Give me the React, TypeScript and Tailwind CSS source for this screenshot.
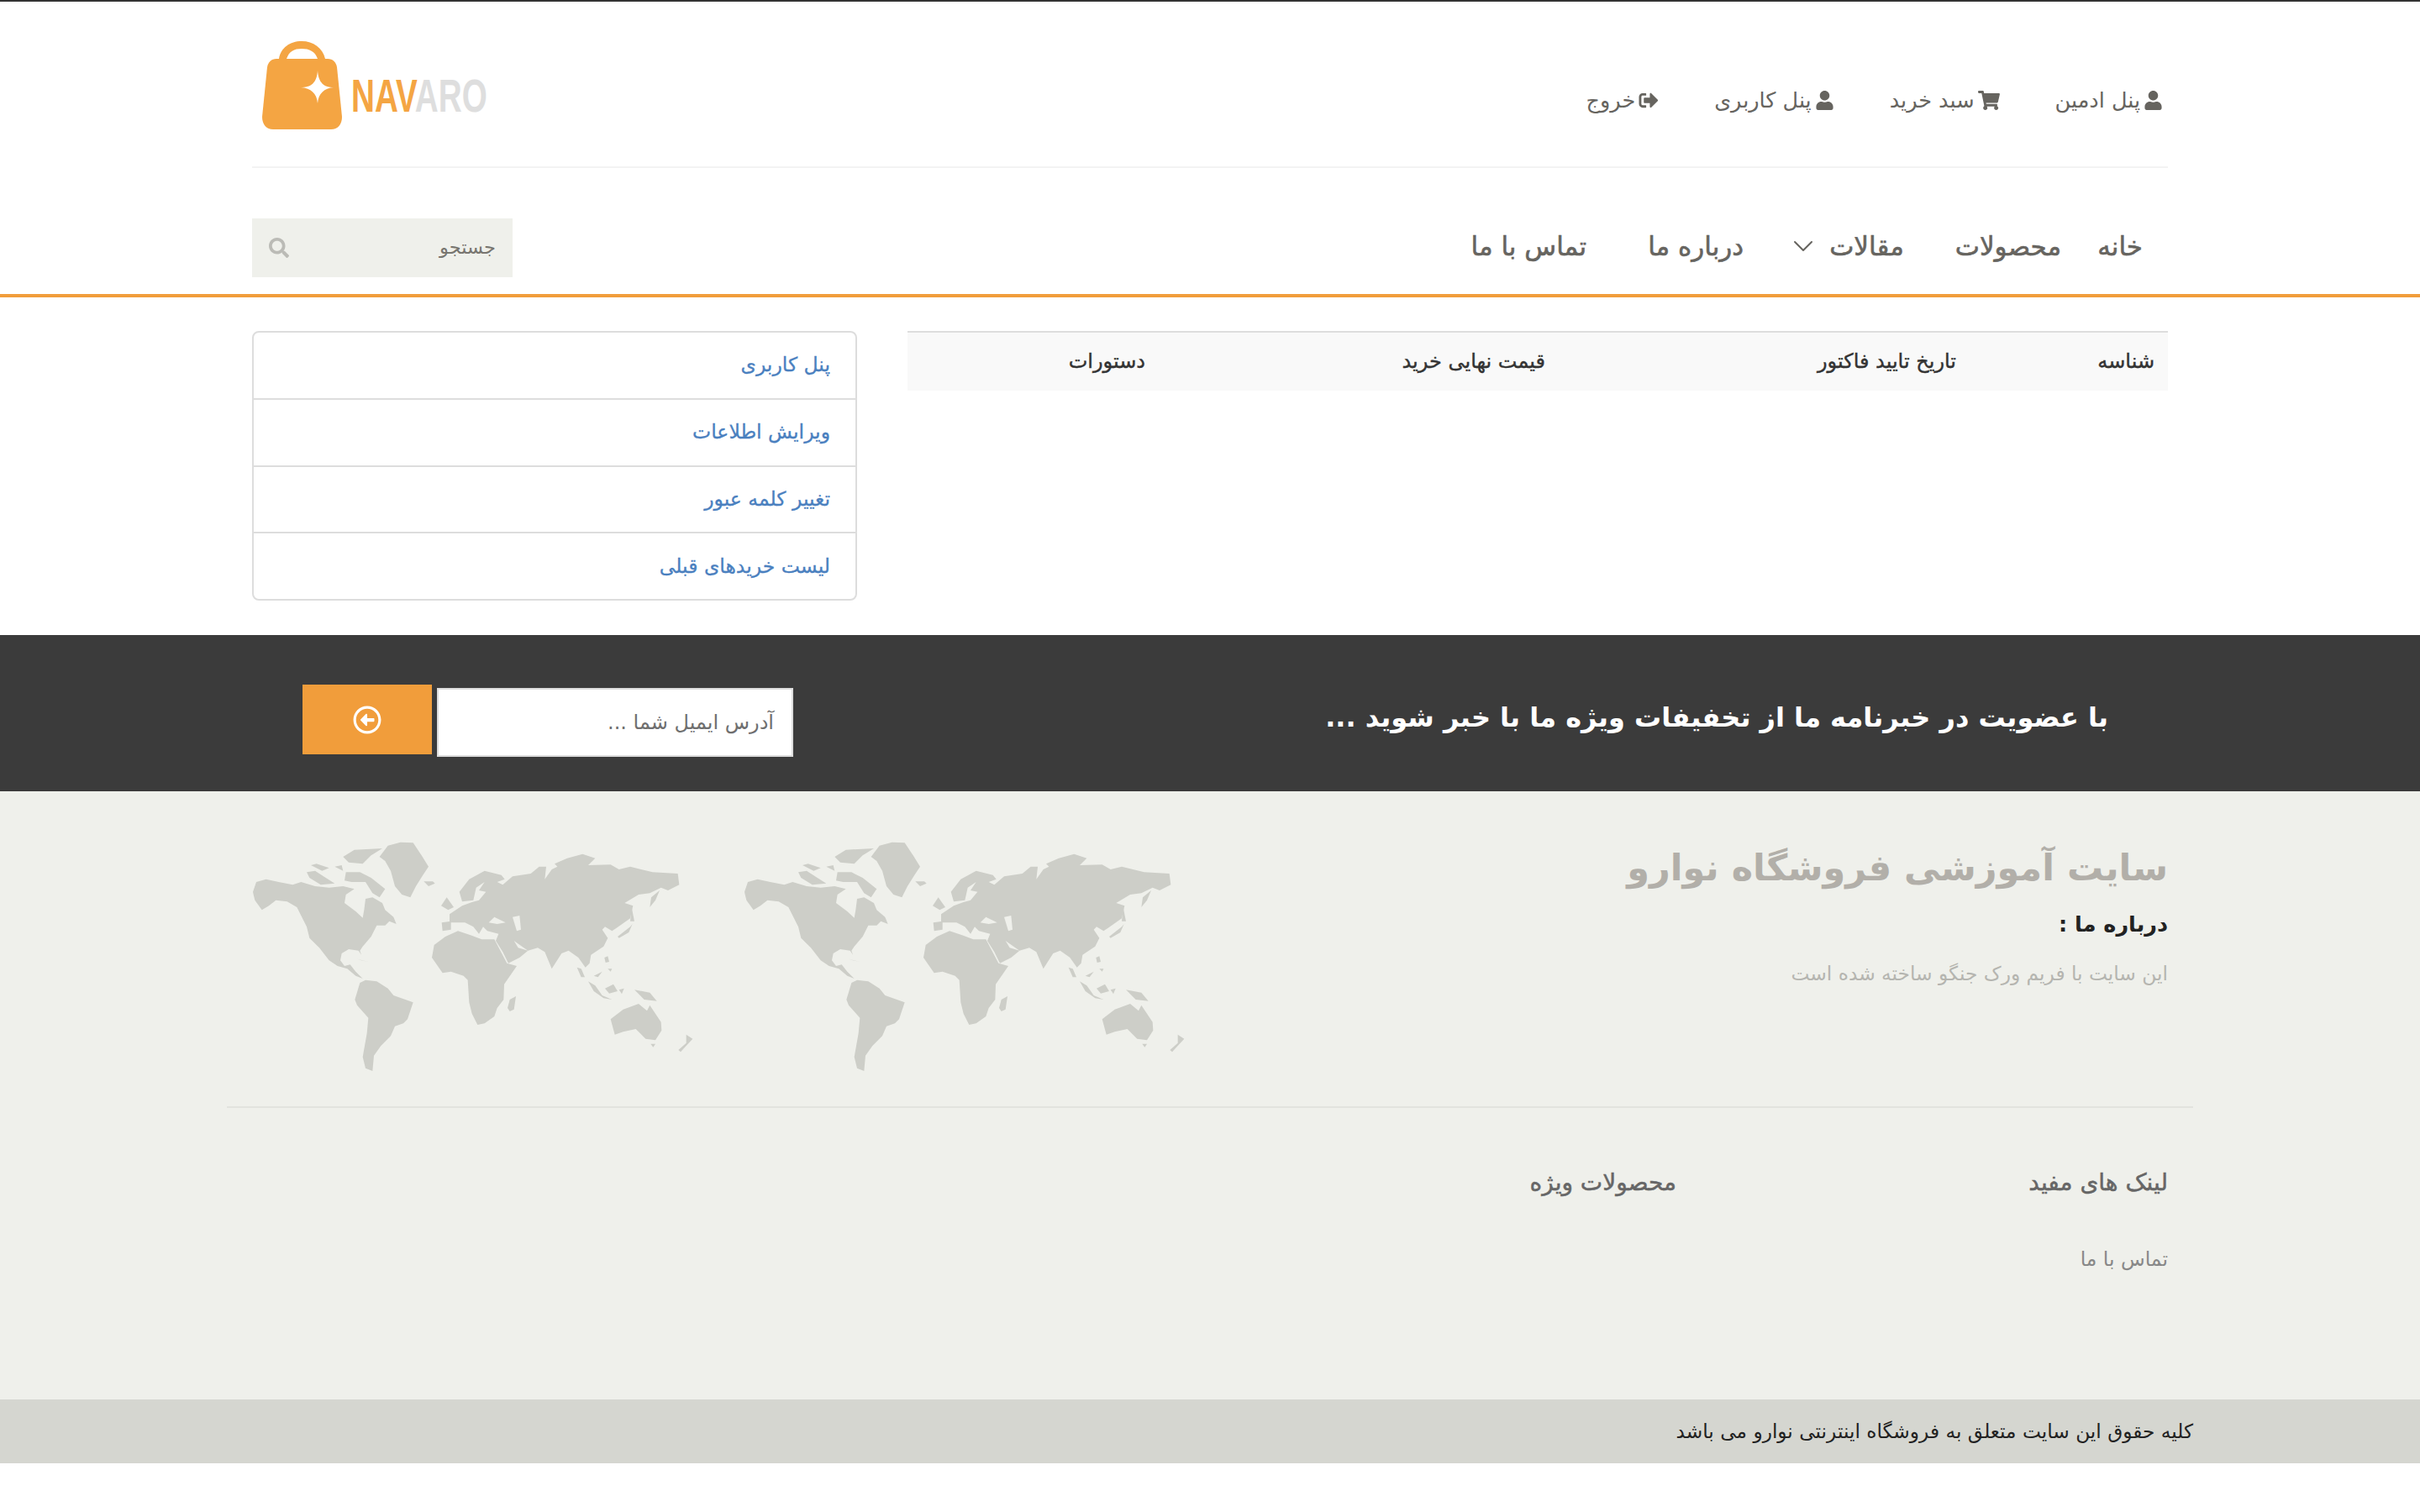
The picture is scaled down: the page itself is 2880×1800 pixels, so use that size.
import React from 'react';
import { ChevronDown } from 'lucide-react';
import { FaUser, FaShoppingCart, FaSignOutAlt, FaSearch, FaRegArrowAltCircleLeft } from 'react-icons/fa';

const topLinks = [
  { label: 'پنل ادمین', icon: <FaUser className="w-[23px] h-[23px]" /> },
  { label: 'سبد خرید', icon: <FaShoppingCart className="w-[26px] h-[23px]" /> },
  { label: 'پنل کاربری', icon: <FaUser className="w-[23px] h-[23px]" /> },
  { label: 'خروج', icon: <FaSignOutAlt className="w-[24px] h-[23px]" /> },
];

const sideLinks = ['پنل کاربری', 'ویرایش اطلاعات', 'تغییر کلمه عبور', 'لیست خریدهای قبلی'];

// traced from the map: 1 unit = 1/3px, second half of the map is shifted by 795
const WorldMap = () => (
  <svg viewBox="15 6 1575 822" className="w-[525px] h-[274px] shrink-0" fill="#cdcec8">
    <path d="M18 185 30 150 65 140 110 150 160 160 190 150 240 165 290 170 340 165 380 175 350 195 345 225 385 255 410 278 415 250 420 210 445 205 480 225 490 250 520 275 530 300 505 290 490 305 460 305 440 345 410 380 400 395 405 410 395 395 360 390 335 405 330 430 345 450 365 445 385 470 410 495 385 485 355 460 320 450 290 430 255 385 220 350 210 310 175 240 140 220 100 215 75 235 50 250 25 215 20 195Z" />
    <path d="M210 115 240 110 270 130 310 155 260 160 220 135Z" />
    <path d="M225 90 245 85 290 100 265 110Z" />
    <path d="M310 95 335 90 340 110Z" />
    <path d="M340 60 380 35 480 30 440 55 410 85 360 80Z" />
    <path d="M350 115 400 115 440 135 490 175 470 205 445 190 420 150 370 150 345 145Z" />
    <path d="M470 60 500 20 545 8 590 10 620 55 645 95 625 125 600 165 580 205 550 195 525 165 510 110 490 75Z" />
    <path d="M628 148 660 148 668 155 645 165Z" />
    <path d="M390 425 430 435 405 430Z" />
    <path d="M400 510 420 500 460 505 500 530 520 555 590 580 570 640 555 655 525 665 510 700 475 735 450 770 445 825 420 815 410 775 425 690 430 635 390 590 382 570Z" />
    <path d="M690 235 710 205 735 240 715 250Z" />
    <path d="M692 295 725 290 725 320 695 325Z" />
    <g transform="translate(795 0)">
      {/* eurasia */}
      <path d="M-75 265-30 235 5 222 30 215 55 185 30 180 50 150 20 170 10 215-30 220-40 185-5 140 50 110 110 125 122 140 95 150 115 160 150 130 215 120 245 95 270 95 265 140 290 105 310 95 300 85 345 65 400 50 445 65 420 90 500 88 530 105 570 95 650 115 740 120 745 160 705 180 680 170 640 190 600 195 550 225 580 235 570 280 520 315 505 325 480 310 470 320 490 350 475 380 430 410 425 440 410 455 385 420 350 395 325 405 290 460 265 400 240 385 205 395 175 420 135 440 115 400 90 360 100 335 60 325 45 310 30 335 10 310-20 295-45 295-75 295Z" />
      {/* seas */}
      <path fill="#eff0eb" d="M65 295 85 275 125 295 95 300Z" />
      <path fill="#eff0eb" d="M150 275 175 270 180 320 165 325Z" />
      <path fill="#eff0eb" d="M155 360 190 385 205 395 170 385Z" />
      {/* africa */}
      <path d="M-138 420-130 375-90 345-45 325 0 340 40 355 85 355 130 440 165 450 120 515 118 570 95 600 85 630 50 655 25 660 5 620-5 580-10 500-25 485-70 470-100 475Z" />
      <path d="M140 570 162 558 155 605 140 612 132 600Z" />
      {/* oceania and islands */}
      <path d="M500 640 545 605 600 585 630 610 640 590 680 650 682 680 660 715 625 710 590 675 545 685 515 695Z" />
      <path d="M643 728 660 728 652 740Z" />
      <path d="M770 695 793 710 770 735 750 757 742 750 770 725Z" />
      <path d="M420 505 445 520 470 555 505 570 475 565 440 540Z" />
      <path d="M480 530 510 515 525 540 495 548Z" />
      <path d="M530 535 548 530 540 550Z" />
      <path d="M585 535 640 545 665 575 620 570Z" />
      <path d="M478 420 490 415 495 435 482 438Z" />
      <path d="M490 460 505 460 500 470Z" />
      <path d="M380 455 395 460 408 490 395 490Z" />
      <path d="M440 485 470 470 455 490Z" />
      <path d="M525 345 570 310 578 300 565 330 530 350Z" />
      <path d="M575 240 585 290 570 290Z" />
      <path d="M640 240 645 205 675 180 660 215Z" />
    </g>
  </svg>
);

export default function App() {
  return (
    <div dir="rtl" className="min-h-[1800px] bg-white border-t-2 border-[#333] text-[#666] font-['DejaVu_Sans',sans-serif]">
      {/* top bar */}
      <div className="w-[2280px] mx-auto h-[198px] border-b-2 border-[#f3f3f3] flex items-center justify-between">
        <div className="flex items-center gap-[66px] pr-[6px] pt-[38px] text-[25.5px]">
          {topLinks.map((link) => (
            <a key={link.label} className="flex items-center gap-[4px] text-[#66645f]">
              {link.icon}
              <span>{link.label}</span>
            </a>
          ))}
        </div>
        <div dir="ltr" className="flex items-end gap-[11px] ml-[12px] mt-[2px]">
          <svg viewBox="0 0 95 105" className="w-[95px] h-[105px]">
            <path fill="#f4a543" d="M20 21C22 8 33 0 47 0S72 8 75 21H66C63 12 56 9 47 9S32 12 29 21Z" />
            <path fill="#f4a543" d="M17 21H78C84 21 88 25 89 31L95 90C95 99 90 105 82 105H13C5 105 0 99 0 90L6 31C7 25 11 21 17 21Z" />
            <path fill="#fff" d="M66 35C67 50 74 55 85 55 74 56 67 62 66 74 65 62 58 56 46 55 58 55 65 50 66 35Z" />
          </svg>
          <div className="w-[160px] h-[60px] mb-[10px] leading-[60px] text-[56px] font-['Liberation_Sans_Narrow','Liberation_Sans',sans-serif] font-bold origin-left scale-x-[0.69] whitespace-nowrap">
            <span className="text-[#f4a543]">NAV</span>
            <span className="text-[#dedede]">ARO</span>
          </div>
        </div>
      </div>

      {/* main nav */}
      <div className="border-b-4 border-[#f19d3b]">
        <div className="w-[2280px] mx-auto pt-[60px] pb-[20px] flex items-center justify-between">
          <nav className="flex items-center pr-[30px] pb-[4px] text-[31px] text-[#66645f] [-webkit-text-stroke:0.6px]">
            <a>خانه</a>
            <a className="mr-[43px]">محصولات</a>
            <a className="mr-[61px] flex items-center gap-[11px]">
              مقالات
              <ChevronDown className="w-[40px] h-[40px]" strokeWidth={1.2} />
            </a>
            <a className="mr-[51px]">درباره ما</a>
            <a className="mr-[73px]">تماس با ما</a>
          </nav>
          <div className="w-[310px] h-[70px] bg-[#eff0eb] flex items-center justify-between pr-[20px] pl-[20px] text-[22.5px] text-[#77756f]">
            <span>جستجو</span>
            <FaSearch className="w-[24px] h-[24px] text-[#bbbbb6]" />
          </div>
        </div>
      </div>

      {/* content */}
      <div className="w-[2280px] mx-auto pt-[40px] pb-[41px] flex items-start justify-between">
        <div className="w-[1500px] h-[71px] pb-[2px] bg-[#f9f9f9] border-t-2 border-[#ddd] flex items-center text-[24px] text-[#333] [-webkit-text-stroke:0.4px]">
          <div className="w-[236px] pr-[16px]">شناسه</div>
          <div className="w-[489px] pr-[16px]">تاریخ تایید فاکتور</div>
          <div className="w-[476px] pr-[16px]">قیمت نهایی خرید</div>
          <div className="w-[299px] pr-[16px]">دستورات</div>
        </div>
        <div className="w-[720px] h-[321px] border-2 border-[#ddd] rounded-[8px] bg-white flex flex-col">
          {sideLinks.map((link, i) => (
            <a
              key={link}
              className={`flex-1 flex items-center pr-[30px] text-[23.5px] text-[#4a80bf] [-webkit-text-stroke:0.3px] ${i > 0 ? 'border-t-2 border-[#ddd]' : ''}`}
            >
              {link}
            </a>
          ))}
        </div>
      </div>

      {/* newsletter */}
      <div className="h-[186px] bg-[#3b3b3b]">
        <div className="w-[2280px] mx-auto h-full flex items-center justify-between pr-[71px] pl-[60px] pt-[18px]">
          <div className="text-[32px] font-bold text-white pb-[8px]">با عضویت در خبرنامه ما از تخفیفات ویژه ما با خبر شوید ...</div>
          <div className="flex items-start gap-[6px]">
            <div className="w-[424px] h-[82px] mt-[4px] bg-white border-2 border-[#ddd] flex items-center pr-[21px] text-[24px] text-[#6f6f6f]">
              آدرس ایمیل شما ...
            </div>
            <button className="w-[154px] h-[83px] bg-[#f19d3b] flex items-center justify-center">
              <FaRegArrowAltCircleLeft className="w-[34px] h-[34px] text-white" />
            </button>
          </div>
        </div>
      </div>

      {/* footer */}
      <div className="h-[724px] bg-[#eff0eb]">
        <div className="w-[2280px] mx-auto h-[375px] flex items-start justify-between">
          <div>
            <h2 className="mt-[61px] leading-[60px] text-[43px] font-bold text-[#b2afa9]">سایت آموزشی فروشگاه نوارو</h2>
            <h3 className="mt-[17px] leading-[40px] text-[25.5px] font-bold text-[#222]">درباره ما :</h3>
            <p className="mt-[19px] leading-[40px] text-[23.3px] text-[#b5b5b0]">این سایت با فریم ورک جنگو ساخته شده است</p>
          </div>
          <div className="pt-[60px] flex gap-[60px]">
            <WorldMap />
            <WorldMap />
          </div>
        </div>
        <div className="w-[2340px] mx-auto border-t-2 border-[#e2e3de]" />
        <div className="w-[2280px] mx-auto pt-[69px] flex">
          <div className="w-[585px]">
            <h4 className="leading-[40px] text-[28px] text-[#666] [-webkit-text-stroke:0.5px]">لینک های مفید</h4>
            <a className="block mt-[51px] leading-[40px] text-[23.5px] text-[#888]">تماس با ما</a>
          </div>
          <h4 className="leading-[40px] text-[28px] text-[#666] [-webkit-text-stroke:0.5px]">محصولات ویژه</h4>
        </div>
      </div>

      {/* copyright */}
      <div className="h-[76px] bg-[#d5d6d0] flex items-center pr-[270px] text-[23.25px] text-[#222]">
        کلیه حقوق این سایت متعلق به فروشگاه اینترنتی نوارو می باشد
      </div>
    </div>
  );
}
